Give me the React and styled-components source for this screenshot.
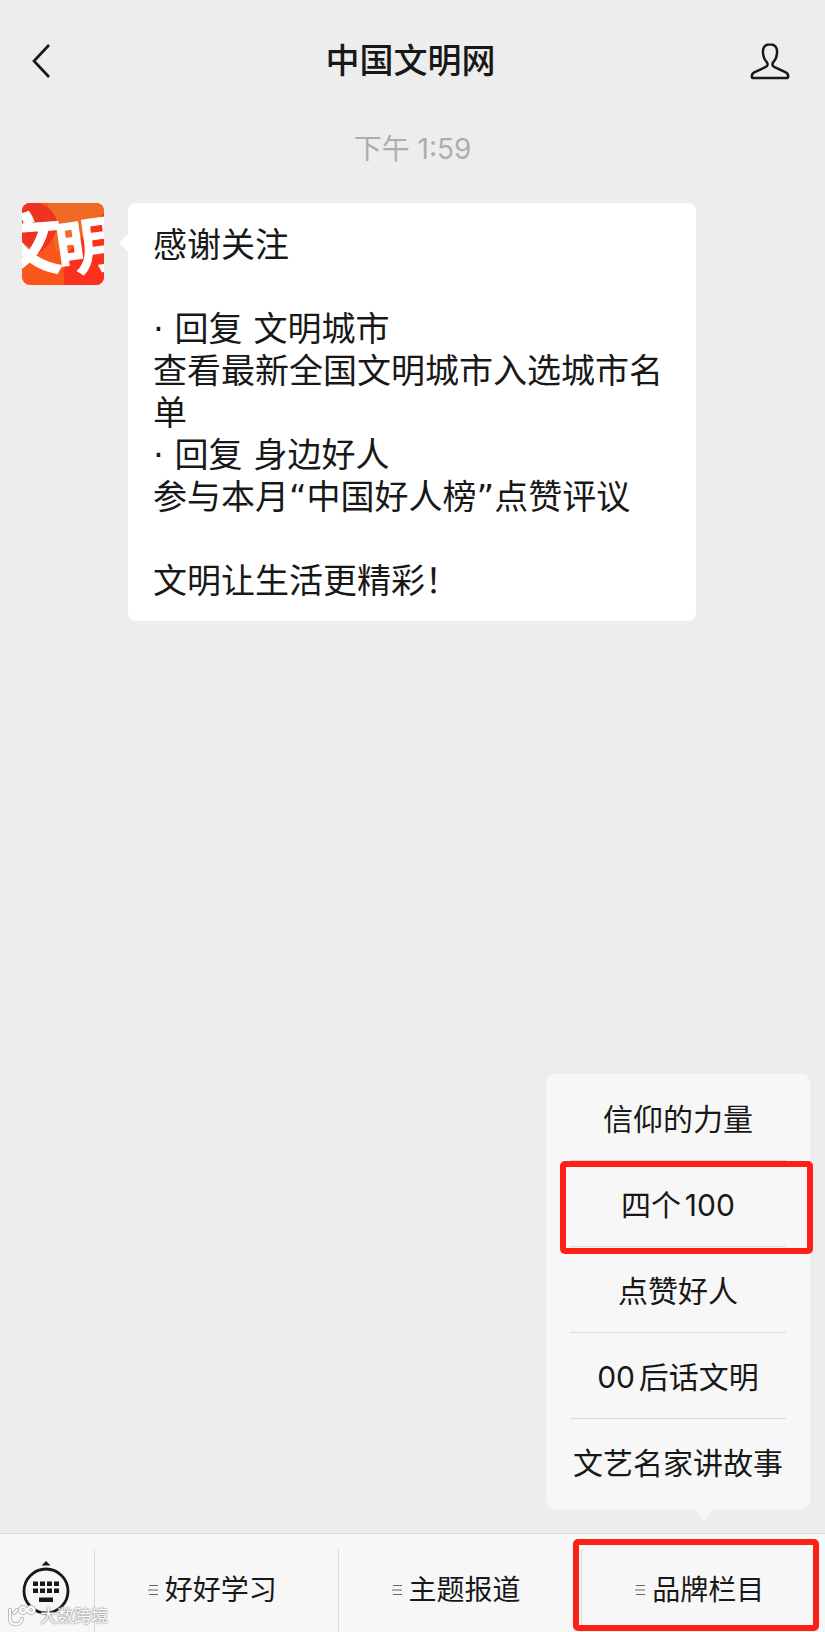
import React from "react";
import styled, { createGlobalStyle, css } from "styled-components";

const GlobalStyle = createGlobalStyle`
  * {
    box-sizing: border-box;
  }

  body {
    margin: 0;
    background-color: #ededed;
    color: #181818;
    font-family: Inter, "Noto Sans CJK SC", sans-serif;
    text-autospace: normal;
  }

  button {
    margin: 0;
    padding: 0;
    border: none;
    background: none;
    color: inherit;
    font: inherit;
    cursor: pointer;
  }
`;

const Page = styled.div`
  display: flex;
  flex-direction: column;
  min-height: 100vh;
`;

const Header = styled.header`
  display: grid;
  grid-template-columns: 40px 1fr 40px;
  align-items: center;
  height: 122px;
  padding: 0 35px 0 31px;
`;

const Title = styled.h1`
  margin: 0;
  font-size: 34px;
  font-weight: 500;
  line-height: 42px;
  text-align: center;
`;

const IconBtn = styled.button`
  display: flex;
`;

const Chat = styled.main`
  flex: 1;
`;

const Time = styled.time`
  display: block;
  padding: 6px 0 33px;
  color: #adadad;
  font-size: 28px;
  line-height: 42px;
  text-align: center;
`;

const MessageRow = styled.div`
  display: flex;
  align-items: flex-start;
  gap: 24px;
  padding: 0 129px 0 22px;
`;

const AvatarSvg = styled.svg`
  flex: none;
  width: 82px;
  height: 82px;
  border-radius: 8px;
`;

const Bubble = styled.div`
  position: relative;
  flex: 1;
  padding: 21px 25px 19px;
  border-radius: 8px;
  background-color: #fff;
  font-family: "DejaVu Sans", "Noto Sans CJK SC", sans-serif;
  font-size: 34px;
  line-height: 42px;

  &::before {
    content: "";
    position: absolute;
    top: 30px;
    left: -9px;
    border: solid transparent;
    border-width: 10px 10px 10px 0;
    border-right-color: #fff;
  }

  p {
    margin: 0;
    min-height: 42px;
  }
`;

const Footer = styled.footer`
  position: relative;
  display: flex;
  height: 99px;
  border-top: 1px solid #d8d8d8;
  background-color: #f7f7f7;
`;

const KeyboardBtn = styled.button`
  display: flex;
  justify-content: center;
  width: 94px;
  padding: 25px 2px 0 0;
`;

const redFrame = css`
  &::after {
    content: "";
    position: absolute;
    border: 6px solid #fc2114;
    border-radius: 5px;
    pointer-events: none;
  }
`;

const Tab = styled.button`
  position: relative;
  display: flex;
  flex: 1;
  align-items: center;
  justify-content: center;
  gap: 6px;
  margin-top: 15px;
  padding: 0 8px 2px 0;
  border-left: 1px solid #dadada;
  font-size: 28px;
  line-height: 40px;

  ${(props) =>
    props.$marked &&
    css`
      ${redFrame}
      &::after {
        inset: -10px 6px 1px -9px;
      }
    `}
`;

const Menu = styled.ul`
  position: absolute;
  right: 15px;
  bottom: calc(100% + 25px);
  width: 264px;
  margin: 0;
  padding: 1px 24px 5px;
  border-radius: 8px;
  background-color: #f7f7f7;
  list-style: none;

  &::after {
    content: "";
    position: absolute;
    top: 100%;
    right: 98px;
    border: solid transparent;
    border-width: 12px 8px 0;
    border-top-color: #f7f7f7;
  }
`;

const MenuItem = styled.li`
  position: relative;

  &:not(:last-child) {
    border-bottom: 1px solid #dadada;
  }

  button {
    width: 100%;
    height: 85px;
    padding-top: 3px;
    font-size: 30px;
    line-height: 42px;
    white-space: nowrap;
  }

  ${(props) =>
    props.$marked &&
    css`
      ${redFrame}
      &::after {
        inset: 0 -27px -8px -10px;
      }
    `}
`;

const Watermark = styled.div`
  position: absolute;
  bottom: 4px;
  left: 8px;
  display: flex;
  align-items: center;
  gap: 4px;
  color: #fafafa;
  font-size: 17px;
  line-height: 24px;
  text-shadow: 0 0 2px #888, 0 0 2px #999;
  pointer-events: none;
`;

const menuItems = [
  { label: "信仰的力量" },
  { label: "四个100", marked: true },
  { label: "点赞好人" },
  { label: "00后话文明" },
  { label: "文艺名家讲故事" },
];

const tabs = [
  { label: "好好学习" },
  { label: "主题报道" },
  { label: "品牌栏目", marked: true },
];

function BackIcon() {
  return (
    <svg width="20" height="36" viewBox="0 0 20 36" fill="none">
      <path d="M18 2 3 18l15 16" stroke="#181818" strokeWidth="2.7" />
    </svg>
  );
}

function PersonIcon() {
  return (
    <svg width="40" height="38" viewBox="0 0 40 38" fill="none">
      <path
        d="M20 2.2c-4.3 0-7.1 3-7.1 7.3 0 4.6 1.4 8 3.6 10.4 1.8 2 1.2 4.3-1.1 5.3L4.2 30.3C2.3 31.2 1.8 32.8 1.8 34.6c0 .9.4 1.3 1.2 1.3h34c.8 0 1.2-.4 1.2-1.3 0-1.8-.5-3.4-2.4-4.3l-11.2-5.1c-2.3-1-2.9-3.3-1.1-5.3 2.2-2.4 3.6-5.8 3.6-10.4 0-4.3-2.8-7.3-7.1-7.3z"
        stroke="#181818"
        strokeWidth="2.5"
        strokeLinejoin="round"
      />
    </svg>
  );
}

function KeyboardIcon() {
  return (
    <svg width="50" height="58" viewBox="0 0 50 58" fill="#181818">
      <path d="M25 2l4.5 4.5h-9z" />
      <circle cx="25" cy="32" r="22" fill="none" stroke="#181818" strokeWidth="2.8" />
      {[12, 19, 26, 33].map((x) => (
        <React.Fragment key={x}>
          <rect x={x} y="22.5" width="5" height="4.5" />
          <rect x={x} y="29.5" width="5" height="4.5" />
        </React.Fragment>
      ))}
      <rect x="18" y="38.5" width="14" height="4.5" />
    </svg>
  );
}

function ListIcon() {
  return (
    <svg width="11" height="12" viewBox="0 0 11 12" fill="none">
      <path d="M1 1.5h9M0 6h10M1 10.5h9" stroke="#666" strokeWidth="1" />
    </svg>
  );
}

function Avatar() {
  return (
    <AvatarSvg viewBox="0 0 82 82" role="img" aria-label="中国文明网">
      <rect width="82" height="82" fill="#f9561b" />
      <path d="M26 0h56v50L34 48z" fill="#ee6a25" />
      <path d="M0 0h16c14 4 20 14 19 24-2 12-10 20-19 27L0 38z" fill="#ee3322" />
      <path d="M42 54 82 10v72H42z" fill="#fb311d" />
      <g
        fill="#fff"
        stroke="#fff"
        strokeWidth="1"
        strokeLinejoin="round"
        fontFamily="Noto Sans CJK SC, sans-serif"
        fontWeight="700"
      >
        <text x="-28" y="67" fontSize="68" transform="rotate(-4 6 40)">文</text>
        <text x="34" y="66" fontSize="60" transform="rotate(-8 60 44)">明</text>
      </g>
    </AvatarSvg>
  );
}

function WatermarkLogo() {
  return (
    <svg width="28" height="22" viewBox="0 0 28 22" fill="none">
      <g stroke="#aaa" strokeWidth="4" strokeLinecap="round">
        <path d="M2 5v9c0 7 11 7 12 0M6 8l3-3" />
        <circle cx="15" cy="5" r="3" />
        <circle cx="23" cy="5" r="3" />
      </g>
      <g stroke="#fafafa" strokeWidth="2.5" strokeLinecap="round">
        <path d="M2 5v9c0 7 11 7 12 0M6 8l3-3" />
        <circle cx="15" cy="5" r="3" />
        <circle cx="23" cy="5" r="3" />
      </g>
    </svg>
  );
}

function App() {
  return (
    <Page>
      <GlobalStyle />
      <Header>
        <IconBtn aria-label="返回">
          <BackIcon />
        </IconBtn>
        <Title>中国文明网</Title>
        <IconBtn aria-label="资料">
          <PersonIcon />
        </IconBtn>
      </Header>
      <Chat>
        <Time>下午 1:59</Time>
        <MessageRow>
          <Avatar />
          <Bubble>
            <p>感谢关注</p>
            <p />
            <p>· 回复 文明城市</p>
            <p>查看最新全国文明城市入选城市名单</p>
            <p>· 回复 身边好人</p>
            <p>参与本月“中国好人榜”点赞评议</p>
            <p />
            <p>文明让生活更精彩！</p>
          </Bubble>
        </MessageRow>
      </Chat>
      <Footer>
        <KeyboardBtn aria-label="键盘">
          <KeyboardIcon />
        </KeyboardBtn>
        {tabs.map((tab) => (
          <Tab key={tab.label} $marked={tab.marked}>
            <ListIcon />
            {tab.label}
          </Tab>
        ))}
        <Menu>
          {menuItems.map((item) => (
            <MenuItem key={item.label} $marked={item.marked}>
              <button>{item.label}</button>
            </MenuItem>
          ))}
        </Menu>
        <Watermark>
          <WatermarkLogo />
          大数跨境
        </Watermark>
      </Footer>
    </Page>
  );
}

export default App;
